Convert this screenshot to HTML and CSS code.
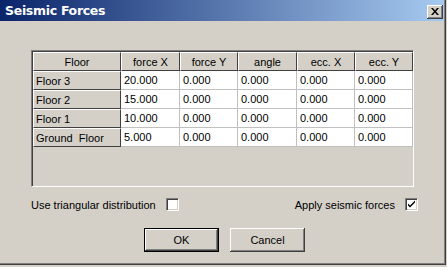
FILE: index.html
```html
<!DOCTYPE html>
<html lang="en">
<head>
    <meta charset="UTF-8">
    <title>Seismic Forces</title>
    <link rel="stylesheet" href="styles.css">
</head>
<body>
    <div class="window">
        <div class="titlebar">
            <span class="title">Seismic Forces</span>
            <button class="close-btn">
                <svg width="8" height="7" viewBox="0 0 8 7">
                    <path d="M0 0h2l2 2.5L6 0h2L5 3.5 8 7H6L4 4.5 2 7H0l3-3.5z" fill="#000"/>
                </svg>
            </button>
        </div>

        <div class="content">
            <div class="grid-frame">
                <div class="grid">
                    <div class="hcell">Floor</div>
                    <div class="hcell">force X</div>
                    <div class="hcell">force Y</div>
                    <div class="hcell">angle</div>
                    <div class="hcell">ecc. X</div>
                    <div class="hcell">ecc. Y</div>

                    <div class="rcell">Floor 3</div>
                    <div class="dcell">20.000</div>
                    <div class="dcell">0.000</div>
                    <div class="dcell">0.000</div>
                    <div class="dcell">0.000</div>
                    <div class="dcell">0.000</div>

                    <div class="rcell">Floor 2</div>
                    <div class="dcell">15.000</div>
                    <div class="dcell">0.000</div>
                    <div class="dcell">0.000</div>
                    <div class="dcell">0.000</div>
                    <div class="dcell">0.000</div>

                    <div class="rcell">Floor 1</div>
                    <div class="dcell">10.000</div>
                    <div class="dcell">0.000</div>
                    <div class="dcell">0.000</div>
                    <div class="dcell">0.000</div>
                    <div class="dcell">0.000</div>

                    <div class="rcell">Ground&nbsp; Floor</div>
                    <div class="dcell">5.000</div>
                    <div class="dcell">0.000</div>
                    <div class="dcell">0.000</div>
                    <div class="dcell">0.000</div>
                    <div class="dcell">0.000</div>
                </div>
            </div>

            <div class="options">
                <label class="option">
                    Use triangular distribution
                    <span class="checkbox"></span>
                </label>
                <label class="option">
                    Apply seismic forces
                    <span class="checkbox">
                        <svg width="9" height="9" viewBox="0 0 9 9">
                            <path d="M1 3.5l2 2 5-5v2l-5 5-2-2z" fill="#000"/>
                        </svg>
                    </span>
                </label>
            </div>

            <div class="buttons">
                <button class="btn btn-default"><span>OK</span></button>
                <button class="btn">Cancel</button>
            </div>
        </div>
    </div>
</body>
</html>
```

FILE: styles.css
```css
:root {
    --face: #d4d0c8;
    --shadow: #808080;
    --dark: #404040;
    --light: #ffffff;
}

body {
    margin: 0;
    font-family: 'Liberation Sans', Arial, sans-serif;
    font-size: 11px;
    color: #000;
    background: var(--face);
}

.window {
    width: 445px;
    height: 264px;
    background: var(--face);
    border-right: 1px solid var(--dark);
    border-bottom: 1px solid var(--dark);
    box-shadow: inset -1px -1px 0 var(--shadow);
    display: flex;
    flex-direction: column;
}

.titlebar {
    height: 21px;
    display: flex;
    align-items: center;
    justify-content: space-between;
    padding: 0 1px 0 5px;
    margin-right: 1px;
    background: linear-gradient(to right, #0a246a, #a6caf0);
}

.title {
    color: #fff;
    font-family: 'DejaVu Sans', sans-serif;
    font-weight: bold;
    font-size: 12.5px;
    letter-spacing: -0.3px;
}

.close-btn {
    width: 16px;
    height: 14px;
    padding: 0;
    margin-top: 2px;
    background: var(--face);
    border: none;
    box-shadow: inset -1px -1px 0 var(--dark), inset 1px 1px 0 var(--light), inset -2px -2px 0 var(--shadow);
    display: flex;
    align-items: center;
    justify-content: center;
}

.content {
    flex-grow: 1;
    padding: 29px 0 0 31px;
}

.grid-frame {
    width: 380px;
    height: 134px;
    border-top: 1px solid var(--shadow);
    border-left: 1px solid var(--shadow);
    border-right: 1px solid var(--light);
    border-bottom: 1px solid var(--light);
    box-shadow: inset 1px 1px 0 var(--dark);
    padding: 1px 0 0 1px;
}

.grid {
    display: grid;
    grid-template-columns: 88px 59px 58px 59px 58px 58px;
    grid-auto-rows: 19px;
}

.hcell,
.rcell {
    background: var(--face);
    border-top: 1px solid var(--light);
    border-left: 1px solid var(--light);
    border-right: 1px solid var(--dark);
    border-bottom: 1px solid var(--dark);
    display: flex;
    align-items: center;
    white-space: nowrap;
}

.hcell {
    justify-content: center;
}

.rcell {
    padding-left: 2px;
}

.dcell {
    background: #fff;
    border-right: 1px solid #c0c0c0;
    border-bottom: 1px solid #c0c0c0;
    display: flex;
    align-items: center;
    padding-left: 3px;
}

.options {
    display: flex;
    justify-content: space-between;
    width: 387px;
    margin-top: 10px;
    height: 15px;
}

.option {
    display: flex;
    align-items: center;
    gap: 10px;
}

.checkbox {
    width: 9px;
    height: 9px;
    background: #fff;
    border-top: 1px solid var(--shadow);
    border-left: 1px solid var(--shadow);
    border-right: 1px solid var(--light);
    border-bottom: 1px solid var(--light);
    box-shadow: inset 1px 1px 0 var(--dark), inset -1px -1px 0 var(--face);
    padding: 1px;
    display: flex;
    align-items: center;
    justify-content: center;
}

.buttons {
    display: flex;
    gap: 11px;
    margin: 16px 0 0 113px;
}

.btn {
    width: 75px;
    height: 24px;
    padding: 0;
    font-family: inherit;
    font-size: 11px;
    color: #000;
    background: var(--face);
    border: none;
    box-shadow: inset -1px -1px 0 var(--dark), inset 1px 1px 0 var(--light), inset -2px -2px 0 var(--shadow);
}

.btn-default {
    border: 1px solid #000;
}
```
